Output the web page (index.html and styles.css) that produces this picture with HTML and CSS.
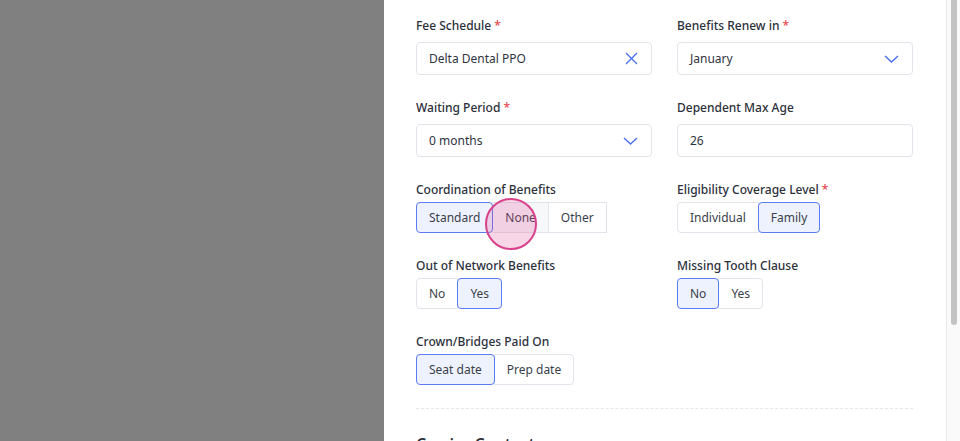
FILE: index.html
```html
<!DOCTYPE html>
<html lang="en">
<head>
  <meta charset="UTF-8">
  <title>Insurance Plan Details</title>
  <link rel="stylesheet" href="styles.css">
</head>
<body>

<div class="screen">
  <div class="backdrop"></div>

  <div class="drawer">
    <div class="drawer-body">
      <div class="form-grid">

        <div class="field">
          <label>Fee Schedule <span class="req">*</span></label>
          <div class="select">
            <span>Delta Dental PPO</span>
            <svg class="icon" width="13" height="13" viewBox="0 0 13 13"><path d="M1 1 L12 12 M12 1 L1 12" stroke="#4c6ef5" stroke-width="1.3" fill="none"/></svg>
          </div>
        </div>

        <div class="field">
          <label>Benefits Renew in <span class="req">*</span></label>
          <div class="select">
            <span>January</span>
            <svg class="icon" width="15" height="8" viewBox="0 0 15 8"><path d="M1 1 L7.5 7 L14 1" stroke="#4c6ef5" stroke-width="1.4" fill="none"/></svg>
          </div>
        </div>

        <div class="field">
          <label>Waiting Period <span class="req">*</span></label>
          <div class="select">
            <span>0 months</span>
            <svg class="icon" width="15" height="8" viewBox="0 0 15 8"><path d="M1 1 L7.5 7 L14 1" stroke="#4c6ef5" stroke-width="1.4" fill="none"/></svg>
          </div>
        </div>

        <div class="field">
          <label>Dependent Max Age</label>
          <div class="select">
            <span>26</span>
          </div>
        </div>

        <div class="field toggle-field">
          <label>Coordination of Benefits</label>
          <div class="toggle-group">
            <button class="active">Standard</button>
            <button class="hover">None</button>
            <button>Other</button>
            <span class="cursor-dot"></span>
          </div>
        </div>

        <div class="field toggle-field">
          <label>Eligibility Coverage Level <span class="req">*</span></label>
          <div class="toggle-group">
            <button>Individual</button>
            <button class="active">Family</button>
          </div>
        </div>

        <div class="field toggle-field">
          <label>Out of Network Benefits</label>
          <div class="toggle-group">
            <button>No</button>
            <button class="active">Yes</button>
          </div>
        </div>

        <div class="field toggle-field">
          <label>Missing Tooth Clause</label>
          <div class="toggle-group">
            <button class="active">No</button>
            <button>Yes</button>
          </div>
        </div>

        <div class="field toggle-field">
          <label>Crown/Bridges Paid On</label>
          <div class="toggle-group">
            <button class="active">Seat date</button>
            <button>Prep date</button>
          </div>
        </div>

      </div>

      <hr class="divider">

      <h3 class="section-title">Carrier Contact</h3>
    </div>

    <div class="scrollbar">
      <div class="thumb"></div>
    </div>
  </div>
</div>

</body>
</html>
```

FILE: styles.css
```css
body {
  margin: 0;
  font-family: 'Noto Sans', 'Open Sans', sans-serif;
  color: #2b303b;
  overflow: hidden;
}

.screen {
  display: flex;
  height: 441px;
}

.backdrop {
  width: 384px;
  background: #808080;
}

.drawer {
  flex: 1;
  display: flex;
  background: #fff;
  overflow: hidden;
}

.drawer-body {
  flex: 1;
  padding: 17px 33px 0 32px;
}

.form-grid {
  display: grid;
  grid-template-columns: 1fr 1fr;
  column-gap: 25px;
  row-gap: 24px;
}

.field label {
  display: block;
  font-size: 12px;
  font-weight: 500;
  line-height: 18px;
  margin-bottom: 7px;
  color: #2b303b;
}

.toggle-field label {
  margin-bottom: 3px;
}

.req {
  color: #e5484d;
}

.select {
  height: 33px;
  box-sizing: border-box;
  border: 1px solid #e1e4ea;
  border-radius: 4px;
  padding: 0 13px 0 12px;
  display: flex;
  align-items: center;
  justify-content: space-between;
  font-size: 12px;
  color: #2f3440;
}

.icon {
  display: block;
}

.toggle-group {
  position: relative;
  display: inline-flex;
  height: 31px;
}

.toggle-group button {
  font-family: inherit;
  font-size: 12px;
  color: #3a3f4b;
  background: #fff;
  border: 1px solid #e1e4ea;
  padding: 0 12px;
  border-radius: 0;
  cursor: pointer;
}

.toggle-group button + button {
  margin-left: -1px;
}

.toggle-group button:first-child {
  border-radius: 4px 0 0 4px;
}

.toggle-group button:last-child {
  border-radius: 0 4px 4px 0;
}

.toggle-group button.active {
  position: relative;
  z-index: 1;
  background: #eef2fe;
  border-color: #5b7cf2;
  border-radius: 4px;
}

.toggle-group button.hover {
  background: #f7f8fa;
  border-left-color: transparent;
}

.cursor-dot {
  position: absolute;
  z-index: 2;
  left: 69px;
  top: -4px;
  width: 48px;
  height: 48px;
  border-radius: 50%;
  border: 2px solid #d8428c;
  background: rgba(222, 70, 145, 0.22);
  pointer-events: none;
}

.divider {
  border: none;
  border-top: 1px dashed #e3e6eb;
  margin: 23px 0 0;
}

.section-title {
  margin: 24px 0 0;
  font-size: 16px;
  font-weight: 600;
  color: #2b303b;
}

.scrollbar {
  width: 14px;
  background: #fafafa;
  border-left: 1px solid #e8e8e8;
  padding: 0 3px 0 4px;
  box-sizing: border-box;
}

.thumb {
  height: 325px;
  background: #c3c3c3;
  border-radius: 0 0 4px 4px;
}
```
